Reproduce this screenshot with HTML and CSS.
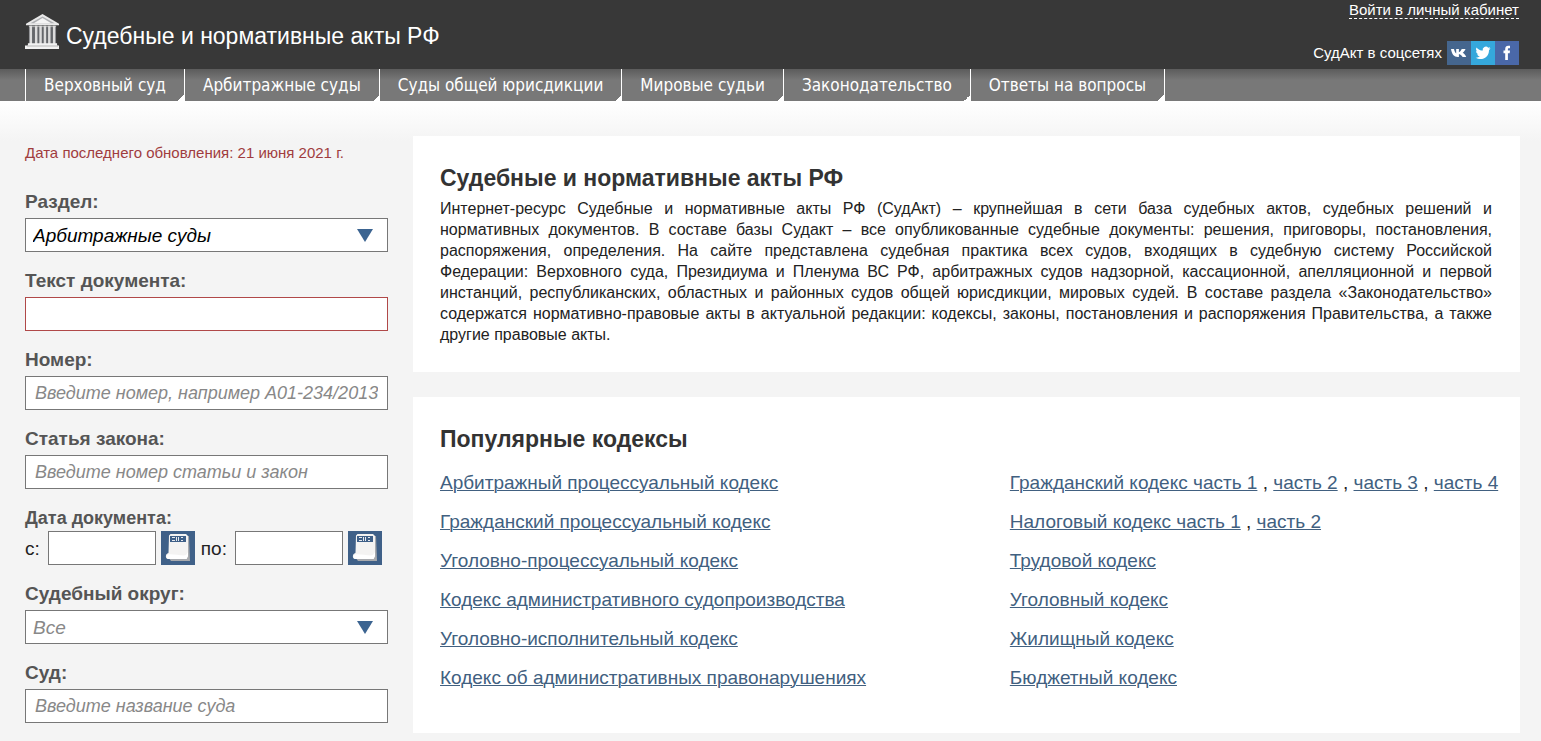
FILE: index.html
```html
<!DOCTYPE html>
<html lang="ru">
<head>
<meta charset="utf-8">
<meta name="viewport" content="width=device-width, initial-scale=1">
<title>Судебные и нормативные акты РФ</title>
<link rel="stylesheet" href="styles.css">
</head>
<body>
<svg class="sprite" aria-hidden="true">
  <symbol id="book" viewBox="0 0 34 34">
    <path d="M11 5h17l1 25H10l-3-4z" fill="#a8aaae"/>
    <path d="M8 4.500 9.500 3H25l2 2v20l-1.500 3H7.500C4 28 4 22.500 7.500 22z" fill="#f4f3f2"/>
    <path d="M7 23.500c4-1 16 2 18 .500l2-3v4l-1.500 3H7.500C5 28 5 25 7 23.500z" fill="#fff"/>
    <path d="M9 5h16v6H9z" fill="#3f6088"/>
    <path d="M11 6.500h3M11 9.500h3M15.500 6v4M17.500 6v4M20 6.500h2M20 9.500h2" stroke="#e6e9ee" fill="none"/>
  </symbol>
</svg>
<header class="header">
  <a class="brand" href="#">
    <svg class="brand-icon" viewBox="0 0 36 36" aria-hidden="true">
      <path d="M18 0 1 10v1.500h34V10z" fill="#e9e9e9"/>
      <path d="M18 2.500 5.500 9.500h25z" fill="#aeb0b3"/>
      <path d="M18 4 9 9.500h18z" fill="#f4f4f4"/>
      <path d="M4 12h28v19H4z" fill="#65676b"/>
      <path d="M4 12h28v1.500H4z" fill="#aaa"/>
      <path d="M6 12v19M11.500 12v19M16 12v19M20.500 12v19M25 12v19M30 12v19" stroke="#dcdcdc" stroke-width="2.500"/>
      <path d="M3 30h30v2.500h2V36H0v-3.500h3z" fill="#f2f2f2"/>
      <path d="M2 32.500h32v1H2z" fill="#b5b5b5"/>
    </svg>
    <span>Судебные и нормативные акты РФ</span>
  </a>
  <div class="header-side">
    <a class="login" href="#">Войти в личный кабинет</a>
    <div class="social">
      <span>СудАкт в соцсетях</span>
      <div class="social-links">
        <a class="vk" href="#" aria-label="ВКонтакте"><svg viewBox="0 0 24 24"><path d="M4 8h3c.400 2 1.200 3.500 2.200 4.500V8h2.700v3.200c1.300-.400 2.200-1.700 2.800-3.200h3.800c-.400 1.500-1.600 2.800-2.800 3.700 1.600.800 2.700 2.200 3.500 4.300h-3.600c-.700-1.500-2-2.500-3.700-3V16h-1C7 16 4.700 13 4 8z"/></svg></a>
        <a class="tw" href="#" aria-label="Twitter"><svg viewBox="0 0 24 24"><path d="M19.500 7.300c-.500.300-1.100.400-1.700.500.600-.400 1.100-1 1.300-1.700-.600.400-1.200.600-1.900.700a3.100 3.100 0 0 0-5.400 2.800c-2.500-.100-4.800-1.300-6.300-3.200-.900 1.500-.400 3.200.900 4.100-.500 0-1-.200-1.400-.400 0 1.500 1 2.800 2.500 3.100-.500.100-.900.100-1.400 0 .400 1.200 1.500 2.100 2.900 2.100A6.300 6.300 0 0 1 4.500 16.600c5.800 3.700 13.500.300 13.500-7.400.600-.500 1.100-1.100 1.500-1.900z"/></svg></a>
        <a class="fb" href="#" aria-label="Facebook"><svg viewBox="0 0 24 24"><path d="M10.200 19v-6.800H8.500V9.600h1.700V8c0-2.200 1.200-3.200 3-3.200h1.800v2.500h-1.200c-.700 0-.9.400-.9 1v1.300H15l-.300 2.600h-1.800V19z"/></svg></a>
      </div>
    </div>
  </div>
</header>
<nav class="nav">
  <a href="#">Верховный суд</a>
  <a href="#">Арбитражные суды</a>
  <a href="#">Суды общей юрисдикции</a>
  <a href="#">Мировые судьи</a>
  <a href="#">Законодательство</a>
  <a href="#">Ответы на вопросы</a>
</nav>
<div class="page">
  <form class="search">
    <p class="updated">Дата последнего обновления: 21 июня 2021 г.</p>
    <div class="field">
      <label for="section">Раздел:</label>
      <div class="select"><select id="section"><option>Арбитражные суды</option></select><svg viewBox="0 0 16 13" aria-hidden="true"><path d="M0 0h16L8 13z"/></svg></div>
    </div>
    <div class="field">
      <label for="text">Текст документа:</label>
      <input class="required" id="text" type="text">
    </div>
    <div class="field">
      <label for="number">Номер:</label>
      <input id="number" type="text" placeholder="Введите номер, например А01-234/2013">
    </div>
    <div class="field">
      <label for="article">Статья закона:</label>
      <input id="article" type="text" placeholder="Введите номер статьи и закон">
    </div>
    <fieldset class="dates">
      <legend>Дата документа:</legend>
      <div class="date-row">
        <label for="from">с:</label>
        <input id="from" type="text">
        <button type="button" aria-label="Выбрать начальную дату"><svg><use href="#book"/></svg></button>
        <label for="to">по:</label>
        <input id="to" type="text">
        <button type="button" aria-label="Выбрать конечную дату"><svg><use href="#book"/></svg></button>
      </div>
    </fieldset>
    <div class="field">
      <label for="district">Судебный округ:</label>
      <div class="select empty"><select id="district"><option>Все</option></select><svg viewBox="0 0 16 13" aria-hidden="true"><path d="M0 0h16L8 13z"/></svg></div>
    </div>
    <div class="field">
      <label for="court">Суд:</label>
      <input id="court" type="text" placeholder="Введите название суда">
    </div>
  </form>
  <main class="content">
    <section class="card">
      <h1>Судебные и нормативные акты РФ</h1>
      <p>Интернет-ресурс Судебные и нормативные акты РФ (СудАкт) – крупнейшая в сети база судебных актов, судебных решений и нормативных&nbsp;документов. В составе базы Судакт – все опубликованные судебные документы: решения, приговоры, постановления, распоряжения, определения. На сайте представлена судебная практика всех судов, входящих в судебную систему Российской Федерации:&nbsp;Верховного суда, Президиума и Пленума ВС РФ, арбитражных судов надзорной, кассационной, апелляционной и первой инстанций,&nbsp;республиканских, областных и районных судов общей юрисдикции, мировых судей. В составе раздела «Законодательство» содержатся&nbsp;нормативно-правовые акты в актуальной редакции: кодексы, законы, постановления и распоряжения Правительства, а также другие&nbsp;правовые&nbsp;акты.</p>
    </section>
    <section class="card">
      <h2>Популярные кодексы</h2>
      <div class="codes">
        <ul>
          <li><a href="#">Арбитражный процессуальный кодекс</a></li>
          <li><a href="#">Гражданский процессуальный кодекс</a></li>
          <li><a href="#">Уголовно-процессуальный кодекс</a></li>
          <li><a href="#">Кодекс административного судопроизводства</a></li>
          <li><a href="#">Уголовно-исполнительный кодекс</a></li>
          <li><a href="#">Кодекс об административных правонарушениях</a></li>
        </ul>
        <ul>
          <li><a href="#">Гражданский кодекс часть 1</a> , <a href="#">часть 2</a> , <a href="#">часть 3</a> , <a href="#">часть 4</a></li>
          <li><a href="#">Налоговый кодекс часть 1</a> , <a href="#">часть 2</a></li>
          <li><a href="#">Трудовой кодекс</a></li>
          <li><a href="#">Уголовный кодекс</a></li>
          <li><a href="#">Жилищный кодекс</a></li>
          <li><a href="#">Бюджетный кодекс</a></li>
        </ul>
      </div>
    </section>
  </main>
</div>
</body>
</html>
```
FILE: styles.css
```css
* { box-sizing: border-box; }
body {
  margin: 0;
  background: #f4f4f4;
  color: #222;
  font: 16px/21px "Liberation Sans", Arial, sans-serif;
}
.sprite { display: none; }
.header {
  display: flex;
  justify-content: space-between;
  height: 69px;
  padding: 0 22px 0 25px;
  background: #383838;
  color: #fff;
}
.brand {
  display: flex;
  align-items: flex-start;
  gap: 6px;
  padding-top: 14px;
  color: #fff;
  font-size: 23px;
  line-height: 44px;
  text-decoration: none;
}
.brand-icon { width: 35px; height: 35px; }
.header-side {
  display: flex;
  flex-direction: column;
  align-items: flex-end;
  gap: 22px;
  font-size: 15px;
}
.login {
  padding-top: 2px;
  border-bottom: 1px dashed #fff;
  color: #fff;
  line-height: 16px;
  text-decoration: none;
}
.social { display: flex; align-items: center; gap: 5px; line-height: 24px; }
.social-links { display: flex; }
.social-links a { width: 24px; height: 24px; }
.social-links svg { display: block; fill: #fff; }
.vk { background: #45668e; }
.tw { background: #35a8dc; }
.fb { background: #4a68a8; }
.nav {
  display: flex;
  height: 32px;
  padding-left: 25px;
  background: linear-gradient(#5c5c5c, #787878 35%);
}
.nav a {
  padding: 0 18px;
  border-right: 1px solid #fff;
  background: linear-gradient(135deg, transparent 50%, #fff 50%) right bottom / 6px 6px no-repeat;
  color: #fff;
  font: 17px/32px "DejaVu Sans Condensed", Tahoma, sans-serif;
  text-decoration: none;
}
.nav a:first-child { border-left: 1px solid #fff; }
.page {
  display: flex;
  align-items: flex-start;
  gap: 25px;
  padding: 35px 21px 8px 25px;
  background: linear-gradient(#fff, #f4f4f4 40px);
}
.search { flex: none; width: 363px; }
.updated { margin: 6px 0 28px; color: #a03c3e; font-size: 15px; line-height: 21px; }
.field { margin-bottom: 18px; }
.field label, legend {
  display: block;
  padding: 0 0 5px;
  color: #555;
  font-size: 19px;
  font-weight: bold;
  line-height: 22px;
}
input, select {
  display: block;
  width: 100%;
  height: 34px;
  margin: 0;
  padding: 0 9px;
  border: 1px solid #777;
  border-radius: 0;
  background: #fff;
  color: #000;
  font: italic 18px "Liberation Sans", Arial, sans-serif;
}
input::placeholder { color: #888; opacity: 1; }
select { padding: 0 7px; font-size: 19px; appearance: none; }
.required { border: 1px solid #b04848; }
.select { position: relative; }
.select svg {
  position: absolute;
  top: 11px;
  right: 15px;
  width: 16px;
  height: 13px;
  fill: #3b6491;
  pointer-events: none;
}
.empty select { color: #888; }
.dates { margin: 0 0 18px; padding: 0; border: 0; }
legend { padding-bottom: 2px; font-size: 18px; }
.date-row { display: flex; align-items: center; color: #222; font-size: 19px; }
.date-row input { width: 108px; margin: 0 5px 0 8px; }
.date-row button {
  width: 34px;
  height: 34px;
  margin-right: 6px;
  padding: 0;
  border: 0;
  background: #3f6088;
}
.date-row svg { display: block; width: 34px; height: 34px; }
.content { flex: 1; display: grid; gap: 25px; min-width: 0; }
.card { padding: 27px 28px 27px 27px; background: #fff; }
h1, h2 { margin: 0; color: #333; font-size: 23px; line-height: 30px; }
.card p { margin: 5px 0 0; text-align: justify; }
.codes {
  display: grid;
  grid-template-columns: minmax(0, 13fr) minmax(0, 11fr);
  padding: 9px 0;
}
.codes ul {
  margin: 0;
  padding: 0;
  list-style: none;
  font-size: 19px;
  line-height: 39px;
  white-space: nowrap;
}
.codes a { color: #416080; text-decoration-thickness: 1px; }
```
